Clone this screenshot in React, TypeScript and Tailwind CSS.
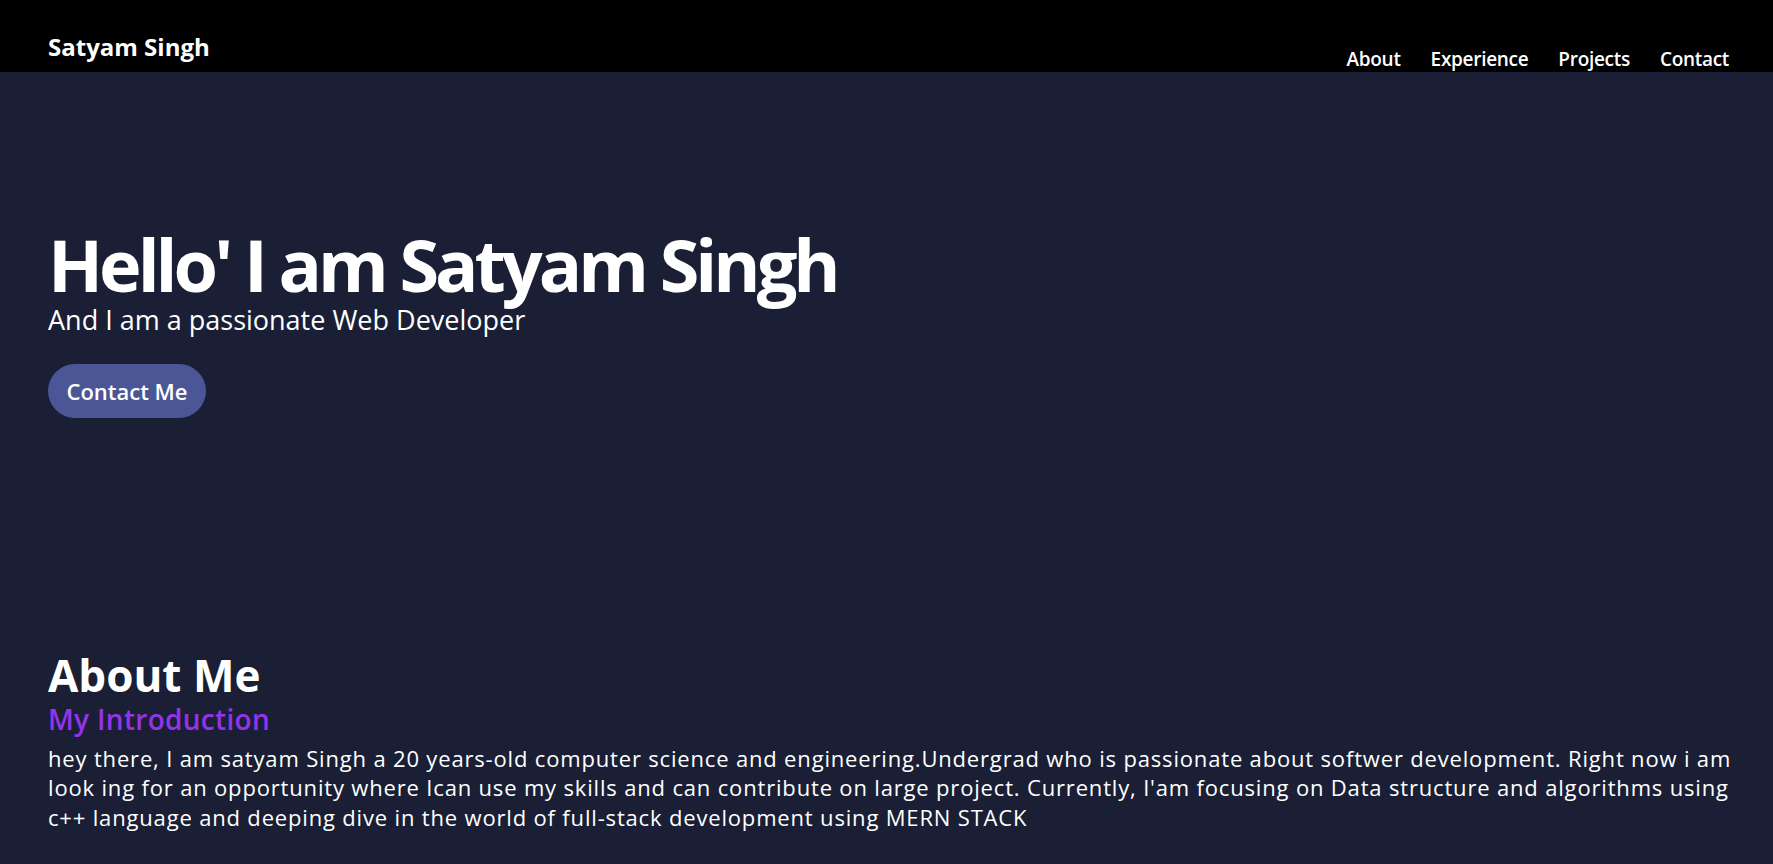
const navLinks = ['About', 'Experience', 'Projects', 'Contact']

export default function App() {
	return (
		<div className="min-h-screen bg-[#1a1f35] font-['Open_Sans',sans-serif] text-white">
			<header className="flex h-[72px] justify-between bg-black pl-12 pr-11">
				<h1 className="pt-[35px] text-2xl leading-none font-bold">Satyam Singh</h1>
				<nav>
					<ul className="flex gap-[30px] pt-[50px] text-[19px] leading-none font-semibold tracking-[-0.3px]">
						{navLinks.map((link) => (
							<li key={link}>
								<a href="#">{link}</a>
							</li>
						))}
					</ul>
				</nav>
			</header>

			<section className="px-12 pt-[156px]">
				<h2 className="text-[72px] leading-none font-bold tracking-[-4px]">
					Hello' I am Satyam Singh
				</h2>
				<p className="mt-[6px] text-[27px] leading-none">And I am a passionate Web Developer</p>
				<button className="mt-[31px] h-[54px] w-[158px] rounded-full bg-[#4b5697] text-[22px] font-semibold">
					Contact Me
				</button>
			</section>

			<section className="mt-[235px] px-12 pb-8">
				<h2 className="text-[44px] leading-none font-bold">About Me</h2>
				<h3 className="mt-2 text-[28px] leading-none font-semibold tracking-[0.3px] text-[#9333ea]">
					My Introduction
				</h3>
				<p className="mt-[11px] text-[22px] leading-[29.3px] tracking-[0.83px] whitespace-nowrap">
					hey there, I am satyam Singh a 20 years-old computer science and engineering.Undergrad who is
					passionate about softwer development. Right now i am
					<br />
					look ing for an opportunity where Ican use my skills and can contribute on large project.
					Currently, I'am focusing on Data structure and algorithms using
					<br />
					c++ language and deeping dive in the world of full-stack development using MERN STACK
				</p>
			</section>
		</div>
	)
}
